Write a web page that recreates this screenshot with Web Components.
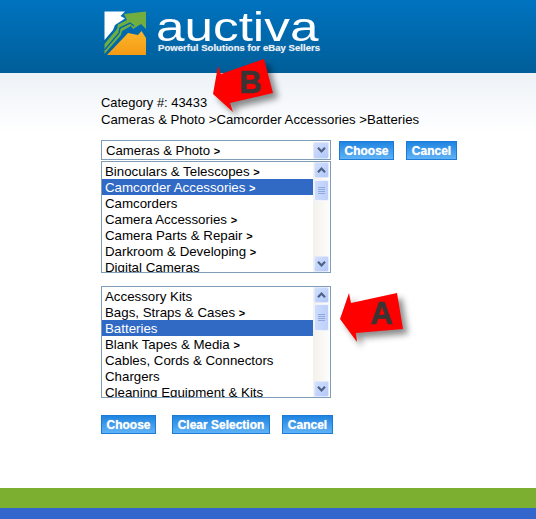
<!DOCTYPE html>
<html>
<head>
<meta charset="utf-8">
<title>Auctiva</title>
<style>
html, body { margin: 0; height: 100%; }
body {
    display: flex;
    flex-direction: column;
    height: 519px;
    overflow: hidden;
    font-family: "Liberation Sans", Arial, sans-serif;
    font-size: 13.2px;
    color: #000;
    background: #fff;
}
</style>
</head>
<body>
<site-header></site-header>
<page-main>
    <category-info number="43433">
        Cameras &amp; Photo &gt;Camcorder Accessories &gt;Batteries
    </category-info>

    <tool-row gap="8" top="12">
        <combo-box>Cameras &amp; Photo <b>&gt;</b></combo-box>
        <tool-row gap="12" top="1">
            <blue-button width="55">Choose</blue-button>
            <blue-button width="51">Cancel</blue-button>
        </tool-row>
    </tool-row>

    <list-box top="1" thumb-top="2" thumb-height="21">
        <list-item more>Binoculars &amp; Telescopes</list-item>
        <list-item more selected>Camcorder Accessories</list-item>
        <list-item>Camcorders</list-item>
        <list-item more>Camera Accessories</list-item>
        <list-item more>Camera Parts &amp; Repair</list-item>
        <list-item more>Darkroom &amp; Developing</list-item>
        <list-item>Digital Cameras</list-item>
    </list-box>

    <list-box top="13" thumb-top="1" thumb-height="27">
        <list-item>Accessory Kits</list-item>
        <list-item more>Bags, Straps &amp; Cases</list-item>
        <list-item selected>Batteries</list-item>
        <list-item more>Blank Tapes &amp; Media</list-item>
        <list-item>Cables, Cords &amp; Connectors</list-item>
        <list-item>Chargers</list-item>
        <list-item>Cleaning Equipment &amp; Kits</list-item>
    </list-box>

    <tool-row gap="16" top="17">
        <blue-button width="55">Choose</blue-button>
        <tool-row gap="12">
            <blue-button width="98">Clear Selection</blue-button>
            <blue-button width="51">Cancel</blue-button>
        </tool-row>
    </tool-row>

    <call-out letter="B" style="left:210px;top:-17px"
        points="3,38 8,10 11,18 54,3 63,37 20,47 23,56" tx="41" ty="37"></call-out>
    <call-out letter="A" style="left:337px;top:216px"
        points="3,30 12,4 14,14 60,4 66,40 19,44 20,53" tx="45" ty="35"></call-out>
</page-main>
<site-footer></site-footer>

<script>
const chevron = (dir) => `
    <svg width="9" height="6" viewBox="0 0 9 6">
        <path d="${dir == 'up' ? 'M1 5.2 L4.5 1.6 L8 5.2' : 'M1 .8 L4.5 4.4 L8 .8'}" fill="none" stroke="#4d6185" stroke-width="2.2"/>
    </svg>`

class SiteHeader extends HTMLElement {
    constructor(){
        super();
        this.attachShadow({ mode: "open" }).innerHTML = `
            <style>
                :host{
                    display: flex;
                    flex: none;
                    box-sizing: border-box;
                    height: 73px;
                    padding: 11px 0 0 104px;
                    gap: 9px;
                    background: linear-gradient(#0073c0, #005e98);
                }
                svg{ display: block; flex: none; }
                .brand{ color: #fff; }
                .word{
                    width: 130px;
                    height: 29px;
                    font-size: 41px;
                    line-height: 33px;
                    transform: scaleX(1.25);
                    transform-origin: 0 0;
                }
                .tag{
                    margin: 2px 0 0 2px;
                    color: #e6eff7;
                    font-size: 9.6px;
                    font-weight: bold;
                    line-height: 12px;
                    white-space: nowrap;
                    text-shadow: 0 0 1px rgba(230,239,247,.6);
                }
            </style>
            <svg width="43" height="45" viewBox="104 11 43 45">
                <defs>
                    <linearGradient id="sun" x1="0" y1="0" x2="0" y2="1">
                        <stop offset="0" stop-color="#fbb62a"/>
                        <stop offset="1" stop-color="#f59a14"/>
                    </linearGradient>
                </defs>
                <path fill="#fff" d="M104.5 11.5 H125 L120.5 16 L125 18.5 L115 25 L113 30 L104.5 40 Z"/>
                <path fill="#6fae3f" d="M104.5 44 L117 29 L118 24.5 L127 20 L124 14 L146 11.5 V29 L141 24 L133 29 L131 26 L122 31 L121 35 L104.5 54 Z"/>
                <path fill="none" stroke="#0068ad" stroke-width="1.4" d="M104.5 50 L119 33 L120 28 L130 23 L134 26"/>
                <path fill="url(#sun)" d="M107 55 L128 33 L138 35 L141.5 31 L146 38 V55 Z"/>
            </svg>
            <div class="brand">
                <div class="word">auctiva</div>
                <div class="tag">Powerful Solutions for eBay Sellers</div>
            </div>
        `
    }
}
window.customElements.define('site-header', SiteHeader)

class PageMain extends HTMLElement {
    constructor(){
        super();
        this.attachShadow({ mode: "open" }).innerHTML = `
            <style>
                :host{
                    display: block;
                    flex: 1;
                    position: relative;
                    padding: 21px 0 0 101px;
                    background: linear-gradient(#edf2f7, #fff 60px);
                }
            </style>
            <slot></slot>
        `
    }
}
window.customElements.define('page-main', PageMain)

class CategoryInfo extends HTMLElement {
    constructor(){
        super();
        this.attachShadow({ mode: "open" }).innerHTML = `
            <style>
                :host{
                    display: block;
                    line-height: 17px;
                }
                .num{ font-size: 12.9px; }
            </style>
            <div class="num">Category #: ${this.getAttribute("number")}</div>
            <div><slot></slot></div>
        `
    }
}
window.customElements.define('category-info', CategoryInfo)

class ToolRow extends HTMLElement {
    constructor(){
        super();
        this.attachShadow({ mode: "open" }).innerHTML = `
            <style>
                :host{
                    display: flex;
                    align-items: flex-start;
                    gap: ${this.getAttribute("gap") || 0}px;
                    margin-top: ${this.getAttribute("top") || 0}px;
                }
            </style>
            <slot></slot>
        `
    }
}
window.customElements.define('tool-row', ToolRow)

class ComboBox extends HTMLElement {
    constructor(){
        super();
        this.attachShadow({ mode: "open" }).innerHTML = `
            <style>
                :host{
                    display: flex;
                    align-items: center;
                    justify-content: space-between;
                    box-sizing: border-box;
                    width: 230px;
                    height: 20px;
                    padding: 0 1px 0 4px;
                    border: 1px solid #7f9db9;
                    background: #fff;
                }
                .arrow{
                    display: flex;
                    align-items: center;
                    justify-content: center;
                    width: 14px;
                    height: 15px;
                    border: 1px solid #e1e9fb;
                    border-radius: 2px;
                    background: linear-gradient(135deg, #d3e0fd, #b2c8fa);
                }
                ::slotted(b){ font-size: 11px; }
            </style>
            <span><slot></slot></span>
            <span class="arrow">${chevron('down')}</span>
        `
    }
}
window.customElements.define('combo-box', ComboBox)

class BlueButton extends HTMLElement {
    constructor(){
        super();
        this.attachShadow({ mode: "open" }).innerHTML = `
            <style>
                :host{
                    display: block;
                    flex: none;
                    box-sizing: border-box;
                    width: ${this.getAttribute("width")}px;
                    height: 19px;
                    border: 1px solid #1b7bd6;
                    background: linear-gradient(#1f84e0, #5fb2f6);
                    color: #fff;
                    font-size: 12px;
                    font-weight: bold;
                    line-height: 19px;
                    text-align: center;
                    text-shadow: 0 0 1px #cfe6fb;
                    white-space: nowrap;
                }
            </style>
            <slot></slot>
        `
    }
}
window.customElements.define('blue-button', BlueButton)

class ListBox extends HTMLElement {
    constructor(){
        super();
        this.attachShadow({ mode: "open" }).innerHTML = `
            <style>
                :host{
                    display: flex;
                    box-sizing: border-box;
                    width: 230px;
                    height: 112px;
                    margin-top: ${this.getAttribute("top") || 0}px;
                    border: 1px solid #7f9db9;
                    background: #fff;
                    font-size: 13.3px;
                }
                .rows{
                    flex: 1;
                    min-width: 0;
                    padding-top: 1px;
                    overflow: hidden;
                }
                .bar{
                    display: flex;
                    flex-direction: column;
                    flex: none;
                    box-sizing: border-box;
                    width: 17px;
                    padding: 0 1px;
                    background: linear-gradient(90deg, #f3f1ec, #fdfdfb);
                }
                .btn{
                    display: flex;
                    align-items: center;
                    justify-content: center;
                    flex: none;
                    box-sizing: border-box;
                    height: 16px;
                    border: 1px solid #e1e9fb;
                    border-radius: 2px;
                    background: linear-gradient(135deg, #d3e0fd, #b2c8fa);
                }
                .thumb{
                    display: flex;
                    flex-direction: column;
                    align-items: center;
                    justify-content: center;
                    gap: 1px;
                    flex: none;
                    box-sizing: border-box;
                    margin-top: ${this.getAttribute("thumb-top")}px;
                    height: ${this.getAttribute("thumb-height")}px;
                    border: 1px solid #eef3fd;
                    border-radius: 2px;
                    background: linear-gradient(90deg, #cddbfd, #bdd0fb);
                }
                .thumb i{
                    display: block;
                    width: 7px;
                    height: 1px;
                    background: #8ea8e0;
                }
                .grow{ flex: 1; }
            </style>
            <div class="rows"><slot></slot></div>
            <div class="bar">
                <div class="btn">${chevron('up')}</div>
                <div class="thumb"><i></i><i></i><i></i><i></i></div>
                <div class="grow"></div>
                <div class="btn">${chevron('down')}</div>
            </div>
        `
    }
}
window.customElements.define('list-box', ListBox)

class ListItem extends HTMLElement {
    constructor(){
        super();
        const more = this.hasAttribute("more")
        this.attachShadow({ mode: "open" }).innerHTML = `
            <style>
                :host{
                    display: block;
                    height: 16px;
                    padding-left: 3px;
                    line-height: 18px;
                    white-space: nowrap;
                }
                :host([selected]){
                    background: #316ac5;
                    color: #fff;
                }
                b{ font-size: 11px; }
            </style>
            <slot></slot>${more ? ' <b>&gt;</b>' : ''}
        `
    }
}
window.customElements.define('list-item', ListItem)

class CallOut extends HTMLElement {
    constructor(){
        super();
        this.attachShadow({ mode: "open" }).innerHTML = `
            <style>
                :host{
                    display: block;
                    position: absolute;
                    width: 72px;
                    height: 60px;
                    filter: drop-shadow(5px 5px 3px rgba(0,0,0,.45));
                }
                svg{ display: block; }
                polygon{ fill: #ff0000; }
                text{
                    font-family: "Liberation Sans", Arial, sans-serif;
                    font-size: 31px;
                    font-weight: bold;
                    fill: #3a3434;
                    stroke: #3a3434;
                    stroke-width: .6px;
                }
            </style>
            <svg width="72" height="60" viewBox="0 0 72 60">
                <polygon points="${this.getAttribute("points")}"/>
                <text x="${this.getAttribute("tx")}" y="${this.getAttribute("ty")}" text-anchor="middle">${this.getAttribute("letter")}</text>
            </svg>
        `
    }
}
window.customElements.define('call-out', CallOut)

class SiteFooter extends HTMLElement {
    constructor(){
        super();
        this.attachShadow({ mode: "open" }).innerHTML = `
            <style>
                :host{
                    display: block;
                    flex: none;
                    height: 31px;
                    background: linear-gradient(#7caf2f 20px, #3366cc 20px);
                }
            </style>
        `
    }
}
window.customElements.define('site-footer', SiteFooter)
</script>
</body>
</html>
